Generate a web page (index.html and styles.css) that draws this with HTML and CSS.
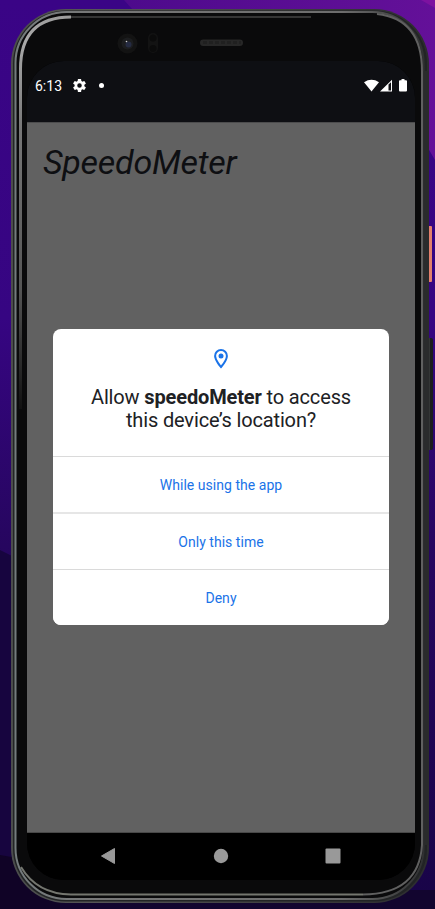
FILE: index.html
```html
<!DOCTYPE html>
<html lang="en">
<head>
<meta charset="utf-8">
<title>SpeedoMeter</title>
<link rel="stylesheet" href="styles.css">
</head>
<body>
<div class="desktop">
  <svg class="backdrop" viewBox="0 0 435 909" aria-hidden="true">
    <defs>
      <linearGradient id="sky" x1="0" y1="0" x2="0" y2="1"><stop offset="0" stop-color="#3a0486"/><stop offset=".35" stop-color="#360582"/><stop offset=".6" stop-color="#26065f"/><stop offset="1" stop-color="#180447"/></linearGradient>
      <linearGradient id="glow" x1="0" y1="0" x2="1" y2="0"><stop offset="0" stop-color="#4d0a8c"/><stop offset="1" stop-color="#641099"/></linearGradient>
    </defs>
    <rect width="435" height="909" fill="url(#sky)"/>
    <path d="M124 0H435V160L400 100 160 40z" fill="url(#glow)"/>
    <path d="M421 0H435V8z" fill="#7d12a0"/>
    <path d="M0 550 12 556V909H0z" fill="#17053f"/>
    <path d="M0 855 40 862 90 909H0z" fill="#100326"/>
    <path d="M60 890H435V909H60z" fill="#12052f"/>
  </svg>
  <div class="phone">
    <svg class="shell" viewBox="0 0 418 894" aria-hidden="true">
      <defs>
        <linearGradient id="edge" x1="0" y1="0" x2="1" y2="0"><stop offset="0" stop-color="#4a4c4b"/><stop offset=".2" stop-color="#555"/><stop offset="1" stop-color="#2c2d2e"/></linearGradient>
        <linearGradient id="rim" x1="0" y1="0" x2="1" y2="0"><stop offset="0" stop-color="#747b7d"/><stop offset=".2" stop-color="#777"/><stop offset=".8" stop-color="#6d6d6d"/><stop offset="1" stop-color="#303132"/></linearGradient>
        <linearGradient id="shine" gradientUnits="userSpaceOnUse" x1="0" y1="0" x2="0" y2="400"><stop offset="0" stop-color="#999"/><stop offset=".08" stop-color="#aaa"/><stop offset=".3" stop-color="#777"/><stop offset=".7" stop-color="#555"/><stop offset="1" stop-color="#111"/></linearGradient>
        <linearGradient id="lip" gradientUnits="userSpaceOnUse" x1="50" y1="0" x2="300" y2="0"><stop offset="0" stop-color="#999"/><stop offset=".3" stop-color="#555"/><stop offset="1" stop-color="#222"/></linearGradient>
      </defs>
      <rect width="418" height="894" rx="55" fill="url(#edge)"/>
      <rect x="2" y="1.500" width="414" height="891" rx="53" fill="#222425"/>
      <rect x="4.500" y="3" width="408" height="887" rx="51" fill="#0a0a0b" stroke="url(#rim)" stroke-width="2"/>
      <path d="M9.500 400V60Q9.500 8 60 8" fill="none" stroke="url(#shine)" stroke-width="3"/>
      <path d="M60 8H300" stroke="#444" stroke-width="1.500"/>
      <path d="M412.500 62V836H418V62z" fill="#2a2b2c"/>
      <path d="M366 5Q411 10 411 62V836Q408 885 352 885.500" fill="none" stroke="#606060" stroke-width="2"/>
      <path d="M352 885.500H60Q26 885 10 858" fill="none" stroke="#74766f" stroke-width="2"/>
      <circle cx="116.500" cy="34.500" r="10" fill="#131313"/>
      <circle cx="116.500" cy="34.500" r="6" fill="#1c1d1f"/>
      <circle cx="117.500" cy="35.500" r="3" fill="#252b42"/>
      <circle cx="115.500" cy="32.500" r=".8" fill="#ccc"/>
      <rect x="137" y="24" width="10" height="20" rx="5" fill="#131313"/>
      <circle cx="142" cy="29" r="3.500" fill="#0b0b0b"/>
      <circle cx="142" cy="39.500" r="3.500" fill="#0b0b0b"/>
      <rect x="189" y="30.500" width="43" height="6.500" rx="3.250" fill="#272727"/>
      <path d="M192 33.500H230" stroke="#202020" stroke-width="3" stroke-dasharray="4 2"/>
    </svg>
    <span class="side power"></span>
    <span class="side volume"></span>
    <div class="screen">
      <header class="status">
        <span class="time">6:13</span>
        <svg class="gear" viewBox="2 2 20 20"><path fill="#fff" fill-rule="evenodd" d="M19.430 12.980a7.800 7.800 0 0 0 0-1.960l2.110-1.650a.5.5 0 0 0 .12-.64l-2-3.460a.5.5 0 0 0-.61-.22l-2.490 1a7.300 7.300 0 0 0-1.690-.98l-.38-2.650A.5.5 0 0 0 14 2h-4a.5.5 0 0 0-.49.420l-.38 2.650c-.61.250-1.170.590-1.690.980l-2.490-1a.5.5 0 0 0-.61.220l-2 3.460a.5.5 0 0 0 .12.640l2.110 1.650a8 8 0 0 0 0 1.960l-2.110 1.650a.5.5 0 0 0-.12.640l2 3.460c.12.220.390.300.610.220l2.490-1c.52.400 1.080.730 1.690.980l.38 2.650c.03.240.240.420.490.420h4c.25 0 .46-.18.490-.42l.38-2.650a7.700 7.700 0 0 0 1.690-.98l2.490 1c.23.090.490 0 .61-.22l2-3.460a.5.500 0 0 0-.12-.64zM12 15.500a3.500 3.500 0 1 1 0-7 3.500 3.500 0 0 1 0 7z"/></svg>
        <span class="dot"></span>
        <svg class="signals" viewBox="0 0 44 14"><g fill="#fff"><path d="M0 3.300Q7.500-1.600 15 3.300L7.500 12.500z"/><path fill-rule="evenodd" d="M16 12.500 28 .8V12.500zM24.500 5.500V11.500H27V3.200z"/><path d="M37.500 0h3v1.200H42q1 0 1 1v9.300q0 1-1 1h-6q-1 0-1-1V2.200q0-1 1-1h1.500z"/></g></svg>
      </header>
      <main class="app">
        <h1 class="title">SpeedoMeter</h1>
        <section class="dialog">
          <div class="prompt">
            <svg class="pin" viewBox="0 0 14 20"><path d="M7 1.100C3.700 1.100 1.100 3.700 1.100 7 1.100 11.200 7 18 7 18S12.900 11.200 12.900 7C12.900 3.700 10.300 1.100 7 1.100z" fill="none" stroke="#1a73e8" stroke-width="2"/><circle cx="7" cy="7" r="2.500" fill="#1a73e8"/></svg>
            <p class="question">Allow <b>speedoMeter</b> to access<br>this device’s location?</p>
          </div>
          <button class="choice">While using the app</button>
          <button class="choice once">Only this time</button>
          <button class="choice">Deny</button>
        </section>
      </main>
      <nav class="nav">
        <svg viewBox="0 0 16 16"><path d="M1.500 8 14.500.5V15.500z" fill="#999" stroke="#999" stroke-linejoin="round"/></svg>
        <svg viewBox="0 0 16 16"><circle cx="8" cy="8" r="7.200" fill="#999"/></svg>
        <svg viewBox="0 0 16 16"><rect x=".5" y=".5" width="15" height="15" rx="1" fill="#999"/></svg>
      </nav>
    </div>
  </div>
</div>
</body>
</html>
```
FILE: styles.css
```css
* { box-sizing: border-box; }
body { margin: 0; font-family: Roboto, "Liberation Sans", sans-serif; }
.desktop { position: relative; width: 435px; height: 909px; padding: 9px 6px 6px 11px; overflow: hidden; }
.backdrop { position: absolute; inset: 0; width: 435px; height: 909px; }
.phone { position: relative; width: 418px; height: 894px; padding: 52px 14px 23px 16px; }
.shell { position: absolute; inset: 0; width: 418px; height: 894px; }
.side { position: absolute; left: 418px; }
.power { top: 217px; width: 3px; height: 56px; background: #e4806c; border-radius: 0 1px 1px 0; }
.volume { top: 329px; width: 4px; height: 112px; background: #1b1d1d; border-left: 1px solid #343636; border-radius: 0 2px 2px 0; }
.screen { position: relative; display: flex; flex-direction: column; width: 388px; height: 819px; border-radius: 37px; overflow: hidden; background: #000; }
.status { display: flex; align-items: center; height: 61px; padding: 0 7px 12px 8px; background: #0e0f13; color: #fff; }
.time { width: 38px; font-size: 14px; line-height: 16px; }
.gear { width: 13px; height: 13px; }
.dot { width: 5px; height: 5px; margin-left: 13px; border-radius: 50%; background: #fff; }
.signals { width: 44px; height: 14px; margin-left: auto; }
.app { display: flex; flex-direction: column; height: 711px; background: #616161; border-top: 1px solid #4c4c4d; border-bottom: 1px solid #484848; }
.title { height: 206px; margin: 0; padding: 19px 16px 0; color: #0e0f12; font-size: 34px; line-height: 40px; font-weight: 400; font-style: italic; letter-spacing: -.25px; }
.dialog { align-self: center; width: 336px; height: 296px; border-radius: 8px; overflow: hidden; background: #fff; }
.prompt { display: flex; flex-direction: column; align-items: center; height: 127px; padding-top: 20px; }
.pin { width: 14px; height: 20px; }
.question { margin: 17px 0 0; color: #202124; font-size: 20px; line-height: 23px; letter-spacing: -.14px; text-align: center; white-space: nowrap; }
.choice { display: block; width: 100%; height: 56.333px; padding: 1px 0 0; border: 0; border-top: 1px solid #dadada; background: #fff; color: #1a73e8; font: 400 14px/16px Roboto, sans-serif; letter-spacing: .03px; }
.once { border-top: 2px solid #e6e6e6; }
.nav { display: flex; align-items: center; justify-content: space-between; height: 47px; padding: 0 74px 1px 73px; background: #000; }
.nav svg { width: 16px; height: 16px; }
```
